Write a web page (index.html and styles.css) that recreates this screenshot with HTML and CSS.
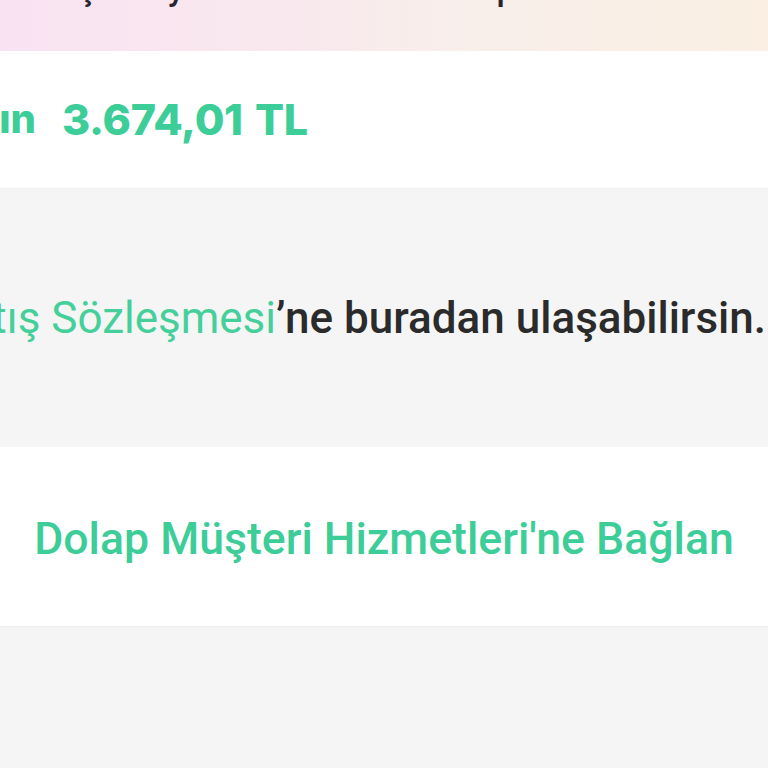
FILE: index.html
```html
<!DOCTYPE html>
<html lang="tr">
<head>
<meta charset="utf-8">
<link rel="stylesheet" href="styles.css">
</head>
<body>
<div class="page">
  <div class="banner">
    <div class="banner-text"><span class="g1">ç</span><span class="g2">y</span><span class="g3">p</span></div>
  </div>
  <div class="total">
    <div class="total-label"><span>Ödenecek Tutarın</span></div>
    <div class="total-value">3.674,01 TL</div>
  </div>
  <div class="contract">
    <p class="contract-text"><span class="link">Mesafeli Satış Sözleşmesi</span>’ne buradan ulaşabilirsin.</p>
  </div>
  <div class="support">
    <span class="support-link">Dolap Müşteri Hizmetleri'ne Bağlan</span>
  </div>
  <div class="rest"></div>
</div>
</body>
</html>
```

FILE: styles.css
```css
* { box-sizing: border-box; }
html, body { margin: 0; padding: 0; }
body { width: 768px; height: 768px; overflow: hidden; background: #f5f5f5; font-family: Roboto, "Noto Sans", sans-serif; }
.page { display: flex; flex-direction: column; width: 768px; }
.banner {
  height: 51px;
  background: linear-gradient(90deg, #f9e3f3 0%, #f9e8ee 35%, #f8eeea 60%, #faefe2 100%);
  overflow: hidden;
}
.banner-text {
  display: flex;
  margin-top: -30px;
  font-size: 34px;
  line-height: 36px;
  color: #2a2530;
  font-weight: 500;
}
.g1 { margin-left: 78px; }
.g2 { margin-left: 72px; }
.g3 { margin-left: 312px; }
.total {
  height: 137px;
  background: #fff;
  display: flex;
  align-items: center;
  padding-bottom: 2px;
  gap: 26px;
}
.total-label {
  width: 36px;
  overflow: hidden;
  display: flex;
  justify-content: flex-end;
  white-space: nowrap;
  font-family: Inter, sans-serif;
  font-weight: 800;
  font-size: 40px;
  color: #3ccd98;
}
.total-value {
  font-family: Inter, sans-serif;
  font-weight: 800;
  font-size: 43px;
  color: #3ccd98;
  letter-spacing: -0.3px;
  word-spacing: 3px;
}
.contract {
  height: 259px;
  display: flex;
  align-items: center;
  justify-content: flex-end;
  overflow: hidden;
  padding-right: 2px;
  border-top: 1px solid #f0f0f0;
}
.contract-text {
  margin: 0;
  white-space: nowrap;
  font-family: Roboto, sans-serif;
  font-size: 44px;
  font-weight: 500;
  color: #2b2b2b;
}
.link { color: #45cf9b; font-weight: 400; }
.support {
  height: 179px;
  background: #fff;
  display: flex;
  align-items: center;
  justify-content: center;
  padding-top: 4px;
}
.support-link {
  font-family: Roboto, sans-serif;
  font-weight: 500;
  font-size: 44.6px;
  color: #3ccd98;
  white-space: nowrap;
}
.rest { height: 142px; background: #f5f5f5; border-top: 1px solid #efefef; }
```
